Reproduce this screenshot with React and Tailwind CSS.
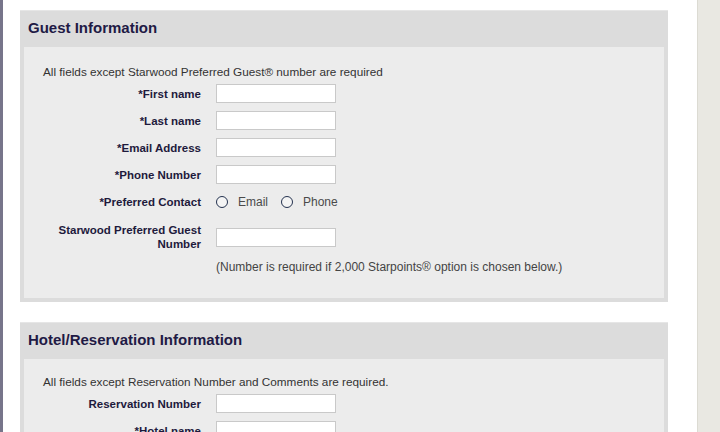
import { useState } from "react";

function Field({ label, children, tall }) {
  return (
    <div className={`flex items-center ${tall ? "h-[44px]" : "h-[27px]"}`}>
      <div className="w-[177px] shrink-0 text-right text-[11.5px] leading-[14px] font-bold text-[#1e1a3c]">
        {label}
      </div>
      <div className="ml-[15px] flex items-center">{children}</div>
    </div>
  );
}

function TextBox() {
  return (
    <input
      type="text"
      className="w-[120px] h-[19px] bg-white border border-[#c9c9c9] outline-none"
    />
  );
}

function Radio({ label, checked, onClick }) {
  return (
    <button onClick={onClick} className="flex items-center mr-[13px]">
      <span className="w-[12px] h-[12px] rounded-full border-[1.5px] border-[#24324f] bg-[#f4f4f4] flex items-center justify-center">
        {checked && <span className="w-[5px] h-[5px] rounded-full bg-[#24324f]" />}
      </span>
      <span className="ml-[10px] text-[12px] text-[#4a4a4a]">{label}</span>
    </button>
  );
}

function Panel({ title, children }) {
  return (
    <div className="bg-[#dcdcdc] border-t border-[#e6e6e6] px-[4px] pb-[4px]">
      <div className="h-[36px] flex items-center pl-[4px] pb-[2px]">
        <h2 className="text-[15px] font-bold text-[#1f1a45]">{title}</h2>
      </div>
      {children}
    </div>
  );
}

export default function App() {
  const [contact, setContact] = useState(null);

  return (
    <div className="flex w-[720px] h-[432px] overflow-hidden bg-white font-['Liberation_Sans',Arial,sans-serif]">
      <div className="w-[3px] shrink-0 bg-[#77758a]" />
      <div className="w-[648px] shrink-0 ml-[17px] pt-[10px]">
        <Panel title="Guest Information">
          <div className="bg-[#ececec] pt-[18px] pb-[24px]">
            <p className="pl-[19px] mb-[1px] text-[11.75px] leading-[14px] text-[#333]">
              All fields except Starwood Preferred Guest® number are required
            </p>
            <Field label="*First name"><TextBox /></Field>
            <Field label="*Last name"><TextBox /></Field>
            <Field label="*Email Address"><TextBox /></Field>
            <Field label="*Phone Number"><TextBox /></Field>
            <Field label="*Preferred Contact">
              <Radio label="Email" checked={contact === "email"} onClick={() => setContact("email")} />
              <Radio label="Phone" checked={contact === "phone"} onClick={() => setContact("phone")} />
            </Field>
            <Field label={<>Starwood Preferred Guest<br />Number</>} tall>
              <TextBox />
            </Field>
            <p className="ml-[192px] mt-[1px] text-[12px] leading-[14px] text-[#444]">
              (Number is required if 2,000 Starpoints® option is chosen below.)
            </p>
          </div>
        </Panel>
        <div className="h-[20px]" />
        <Panel title="Hotel/Reservation Information">
          <div className="bg-[#ececec] pt-[16px] pb-[24px]">
            <p className="pl-[19px] mb-[1px] text-[11.75px] leading-[14px] text-[#333]">
              All fields except Reservation Number and Comments are required.
            </p>
            <Field label="Reservation Number"><TextBox /></Field>
            <Field label="*Hotel name"><TextBox /></Field>
          </div>
        </Panel>
      </div>
      <div className="w-[29px] shrink-0" />
      <div className="flex-1 bg-[#e9e8e2] border-l border-[#dcdbd3]" />
    </div>
  );
}
